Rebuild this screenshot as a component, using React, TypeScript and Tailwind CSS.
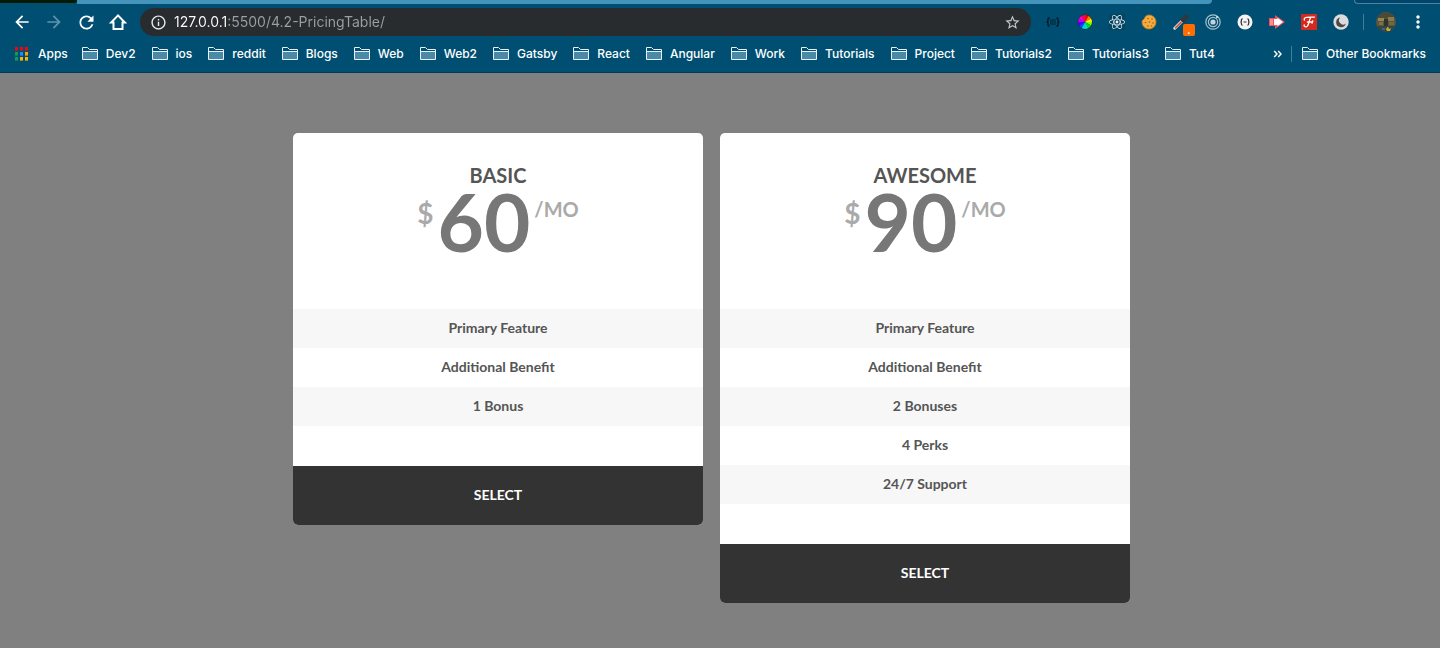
import type { ReactNode } from "react";
import { FaReact } from "react-icons/fa";
import {
  MdArrowBack,
  MdArrowForward,
  MdMoreVert,
  MdOutlineInfo,
  MdRefresh,
  MdStarBorder,
} from "react-icons/md";

const bookmarks = [
  "Dev2",
  "ios",
  "reddit",
  "Blogs",
  "Web",
  "Web2",
  "Gatsby",
  "React",
  "Angular",
  "Work",
  "Tutorials",
  "Project",
  "Tutorials2",
  "Tutorials3",
  "Tut4",
];

const plans = [
  {
    name: "Basic",
    price: 60,
    features: ["Primary Feature", "Additional Benefit", "1 Bonus"],
  },
  {
    name: "Awesome",
    price: 90,
    features: [
      "Primary Feature",
      "Additional Benefit",
      "2 Bonuses",
      "4 Perks",
      "24/7 Support",
    ],
  },
];

const appColors = [
  "#ff0000", "#ff0000", "#ff0000",
  "#0f9d58", "#1a8cff", "#ffa000",
  "#0f9d58", "#ffb300", "#ffb300",
];

const wheelColors = [
  "#ff0000", "#ff8000", "#ffee00", "#80ff00", "#00e020", "#00e8a0",
  "#00c8ff", "#0050ff", "#5000ff", "#b000ff", "#ff00d0", "#ff0060",
];

function HomeIcon() {
  return (
    <svg width="18" height="18" viewBox="0 0 18 18" fill="none" stroke="currentColor" strokeWidth="2">
      <path d="M9 2.4 L15.8 9.5 H13.5 V16 H4.5 V9.5 H2.2 Z" />
    </svg>
  );
}

function FolderIcon() {
  return (
    <svg width="16" height="14" viewBox="0 0 16 14" className="shrink-0">
      <path d="M1 5 H15 V13 H1 Z" fill="#4a8aa6" />
      <path
        d="M0.5 12.5 V0.5 H5.5 L7.5 2.5 H15.5 V12.5 Z M0.5 4.5 H15.5"
        fill="none"
        stroke="#e8f1f5"
      />
    </svg>
  );
}

function AppsIcon() {
  return (
    <svg width="14" height="14" viewBox="0 0 14 14" className="shrink-0">
      {appColors.map((color, i) => (
        <rect key={i} x={(i % 3) * 5} y={Math.floor(i / 3) * 5} width="3" height="3.6" fill={color} />
      ))}
    </svg>
  );
}

function JsonIcon() {
  return (
    <svg width="14" height="12" viewBox="0 0 14 12" fill="none" stroke="#04141d" strokeWidth="1.3">
      <path d="M3.6 1.8 Q2 1.8 2 3 V4.8 Q2 6 0.6 6 Q2 6 2 7.2 V9 Q2 10.2 3.6 10.2" />
      <path d="M10.4 1.8 Q12 1.8 12 3 V4.8 Q12 6 13.4 6 Q12 6 12 7.2 V9 Q12 10.2 10.4 10.2" />
      <path d="M4.2 4 H9.8 M4.2 6 H9.8 M4.2 8 H9.8" strokeWidth="1" strokeDasharray="1.5 0.5" />
    </svg>
  );
}

function ColorWheelIcon() {
  const point = (i: number) => {
    const a = ((i * 30 - 90) * Math.PI) / 180;
    return `${8 + 7 * Math.cos(a)} ${8 + 7 * Math.sin(a)}`;
  };
  return (
    <svg width="16" height="16" viewBox="0 0 16 16">
      <circle cx="8" cy="8" r="7.5" fill="#222222" />
      {wheelColors.map((color, i) => (
        <path key={color} d={`M8 8 L${point(i)} A7 7 0 0 1 ${point(i + 1)} Z`} fill={color} />
      ))}
    </svg>
  );
}

function CookieIcon() {
  return (
    <svg width="16" height="16" viewBox="0 0 16 16">
      <path
        d="M8 1 A7 7 0 1 1 1 8 Q1 6 2.6 5.4 Q3.6 4.8 3.8 3.4 Q5.5 1 8 1 Z"
        fill="#f2ab3c"
        stroke="#cf7d1c"
        strokeWidth="0.8"
      />
      <g fill="#a3601c">
        <circle cx="7" cy="4.5" r="0.8" />
        <circle cx="11" cy="5" r="0.8" />
        <circle cx="8.5" cy="8" r="0.8" />
        <circle cx="4.5" cy="8.5" r="0.8" />
        <circle cx="12" cy="9" r="0.8" />
        <circle cx="7" cy="12" r="0.8" />
        <circle cx="10.5" cy="12" r="0.7" />
      </g>
    </svg>
  );
}

function EyedropperIcon() {
  return (
    <svg width="16" height="16" viewBox="0 0 16 16" strokeLinecap="round">
      <path d="M1.8 14.2 L9 7" stroke="#dfe6ea" strokeWidth="3" />
      <path d="M2.5 13.8 L8 8.2" stroke="#d9482b" strokeWidth="1.6" />
      <path d="M7.5 4.5 L11.5 8.5" stroke="#33373a" strokeWidth="2" />
      <path d="M10 6 L13.5 2.5" stroke="#33373a" strokeWidth="4" />
    </svg>
  );
}

function TargetIcon() {
  return (
    <svg width="16" height="16" viewBox="0 0 16 16" fill="none" stroke="#a9c0cb">
      <circle cx="8" cy="8" r="7.2" strokeWidth="1.2" />
      <circle cx="8" cy="8" r="4.6" strokeWidth="1.2" />
      <circle cx="8" cy="8" r="2.6" fill="#c4d2d9" stroke="none" />
      <circle cx="12" cy="3" r="1.1" fill="#dbe5ea" stroke="none" />
    </svg>
  );
}

function BracesIcon() {
  return (
    <svg width="16" height="16" viewBox="0 0 16 16">
      <circle cx="8" cy="8" r="7.5" fill="#f4f4f4" />
      <path
        d="M5.6 4.8 Q4.4 4.8 4.4 6 V7 Q4.4 8 3.4 8 Q4.4 8 4.4 9 V10 Q4.4 11.2 5.6 11.2 M10.4 4.8 Q11.6 4.8 11.6 6 V7 Q11.6 8 12.6 8 Q11.6 8 11.6 9 V10 Q11.6 11.2 10.4 11.2 M6.5 8 H9.5"
        fill="none"
        stroke="#333333"
        strokeWidth="1.2"
      />
    </svg>
  );
}

function ArrowBlockIcon() {
  return (
    <svg width="16" height="14" viewBox="0 0 16 14">
      <path d="M0 3 H6 V0 L16 7 L6 14 V11 H0 Z" fill="#f0525a" />
      <path d="M5 4 H8.5 V2.8 L14 7 L8.5 11.2 V10 H5 Z" fill="#ffffff" />
      <path d="M1 4 H4 V10 H1 Z" fill="#f98c92" />
    </svg>
  );
}

function ScriptFIcon() {
  return (
    <svg width="16" height="16" viewBox="0 0 16 16">
      <rect width="16" height="16" fill="#d42a1e" />
      <path
        d="M3.4 6.2 Q2.6 3.8 5.4 3.4 Q8 3 13.4 3.2 M9.6 3.4 Q8.2 6.6 7.6 9.6 Q6.8 12.8 4.4 12.8 Q2.8 12.6 3.2 11 M6.4 8 H11.2 M11.8 6.8 L11 9.2"
        fill="none"
        stroke="#ffffff"
        strokeWidth="1.3"
        strokeLinecap="round"
      />
    </svg>
  );
}

function MoonIcon() {
  return (
    <svg width="16" height="16" viewBox="0 0 16 16">
      <circle cx="8" cy="8" r="7.7" fill="#dcdcdc" />
      <path d="M7.4 3.4 A4.9 4.9 0 1 0 12.8 9.4 A4 4 0 0 1 7.4 3.4 Z" fill="#4a4a4a" />
    </svg>
  );
}

function Avatar() {
  return (
    <svg width="20" height="20" viewBox="0 0 20 20">
      <clipPath id="avatar">
        <circle cx="10" cy="10" r="10" />
      </clipPath>
      <g clipPath="url(#avatar)">
        <rect width="20" height="20" fill="#5b5640" />
        <rect width="20" height="6" fill="#4a4a38" />
        <rect x="2" y="6" width="6" height="3" fill="#96854f" />
        <rect x="12" y="5" width="6" height="4" fill="#8a7a4a" />
        <rect x="8" y="7" width="4" height="8" fill="#2e332c" />
        <rect x="3" y="10" width="4" height="3" fill="#7d7145" />
        <rect x="13" y="10" width="5" height="3" fill="#6e6a44" />
        <rect y="14" width="20" height="6" fill="#39453f" />
        <rect x="6" y="16" width="3" height="2" fill="#3c5fa0" />
        <path d="M10 17 L12 14.5 L13 17 L15 16 L14 19 H11 Z" fill="#c9b02c" />
      </g>
    </svg>
  );
}

const extensions: { label: string; icon: ReactNode; badge?: string }[] = [
  { label: "JSON viewer", icon: <JsonIcon /> },
  { label: "Color wheel", icon: <ColorWheelIcon /> },
  {
    label: "React DevTools",
    icon: <FaReact size={16} className="bg-[#08435f] text-[#e6f3f8]" />,
  },
  { label: "Cookies", icon: <CookieIcon /> },
  { label: "Color picker", icon: <EyedropperIcon />, badge: "." },
  { label: "Target", icon: <TargetIcon /> },
  { label: "Braces", icon: <BracesIcon /> },
  { label: "Forward", icon: <ArrowBlockIcon /> },
  { label: "Font finder", icon: <ScriptFIcon /> },
  { label: "Dark mode", icon: <MoonIcon /> },
];

interface ToolButtonProps {
  label: string;
  children: ReactNode;
  badge?: string;
}

function ToolButton({ label, children, badge }: ToolButtonProps) {
  return (
    <button
      type="button"
      aria-label={label}
      className="relative flex h-7 w-8 shrink-0 items-center justify-center"
    >
      {children}
      {badge && (
        <span className="absolute right-0.5 bottom-0 flex h-3 w-3 items-center justify-center rounded-xs bg-[#ff6d00] text-[10px] leading-none font-bold text-white">
          {badge}
        </span>
      )}
    </button>
  );
}

function BrowserChrome() {
  return (
    <header className="border-b border-[#003a55] bg-[#004f73] font-['Inter',sans-serif] text-white">
      {/* Bottom edge of the tab strip */}
      <div className="flex h-1 justify-between">
        <div className="h-[3px] w-[77px] rounded-br-sm bg-[#041a04]" />
        <div className="h-1 flex-1 rounded-br-md bg-[#4493ba]" />
        <div className="ml-[142px] h-1 w-[86px] rounded-bl-md border-b border-l border-[#4586a6] bg-[#04456b]" />
      </div>

      {/* Toolbar */}
      <div className="flex h-9 items-center px-1.5">
        <ToolButton label="Back">
          <MdArrowBack size={20} />
        </ToolButton>
        <ToolButton label="Forward">
          <MdArrowForward size={20} className="text-[#5f93ab]" />
        </ToolButton>
        <ToolButton label="Reload">
          <MdRefresh size={21} />
        </ToolButton>
        <ToolButton label="Home">
          <HomeIcon />
        </ToolButton>
        <div className="mx-1.5 flex h-7 min-w-0 flex-1 items-center rounded-full bg-[#282c2f] px-2.5">
          <MdOutlineInfo size={17} className="shrink-0 text-[#e8eaed]" />
          <input
            type="text"
            aria-label="Address"
            defaultValue="127.0.0.1:5500/4.2-PricingTable/"
            className="ml-[7px] min-w-0 flex-1 bg-[linear-gradient(90deg,#ffffff_54px,#9aa0a6_54px)] bg-clip-text font-['Inter',sans-serif] text-sm text-transparent caret-white outline-none"
          />
          <button type="button" aria-label="Bookmark this page">
            <MdStarBorder size={17} className="text-[#c4c7ca]" />
          </button>
        </div>
        {extensions.map((ext) => (
          <ToolButton key={ext.label} label={ext.label} badge={ext.badge}>
            {ext.icon}
          </ToolButton>
        ))}
        <div className="mx-1.5 h-4 w-px bg-[#40809c]" />
        <ToolButton label="Profile">
          <Avatar />
        </ToolButton>
        <ToolButton label="Menu">
          <MdMoreVert size={20} />
        </ToolButton>
      </div>

      {/* Bookmarks bar */}
      <nav className="flex h-8 items-center pr-3.5 pb-1 pl-[15px] text-xs font-medium">
        <a href="#" className="mr-3.5 flex items-center gap-[9px]">
          <AppsIcon />
          Apps
        </a>
        <div className="flex min-w-0 flex-1 gap-4 overflow-hidden">
          {bookmarks.map((name) => (
            <a key={name} href="#" className="flex shrink-0 items-center gap-2">
              <FolderIcon />
              {name}
            </a>
          ))}
        </div>
        <button type="button" aria-label="More bookmarks" className="px-2">
          <svg width="10" height="8" viewBox="0 0 10 8" fill="none" stroke="currentColor" strokeWidth="1.4">
            <path d="M1.2 1 L4 4 L1.2 7 M5.2 1 L8 4 L5.2 7" />
          </svg>
        </button>
        <div className="mr-2.5 h-4 w-px bg-[#40809c]" />
        <a href="#" className="flex items-center gap-2">
          <FolderIcon />
          Other Bookmarks
        </a>
      </nav>
    </header>
  );
}

interface PlanCardProps {
  name: string;
  price: number;
  features: string[];
}

function PlanCard({ name, price, features }: PlanCardProps) {
  return (
    <section className="mr-[17px] min-w-0 flex-1 overflow-hidden rounded-[5px] bg-white text-center">
      <div className="h-44 pt-7">
        <h2 className="text-xl leading-7 font-bold text-[#555555] uppercase">{name}</h2>
        <p className="flex items-start justify-center gap-1 font-bold text-[#aaaaaa]">
          <span className="pt-2.5 text-[28px] leading-7">$</span>
          <span className="text-[80px] leading-16 text-[#777777]">{price}</span>
          <span className="pt-1.5 text-xl leading-7 uppercase">/mo</span>
        </p>
      </div>
      <ul className="pb-10 text-sm font-bold text-[#555555]">
        {features.map((feature) => (
          <li key={feature} className="h-[39px] leading-[37px] odd:bg-[#f7f7f7]">
            {feature}
          </li>
        ))}
      </ul>
      <button
        type="button"
        className="h-[59px] w-full bg-[#333333] pb-0.5 text-sm font-bold text-white uppercase"
      >
        Select
      </button>
    </section>
  );
}

export default function App() {
  return (
    <div className="min-h-screen bg-[#808080]">
      <BrowserChrome />
      <main className="mx-auto flex max-w-[854px] items-start pt-15 pb-11 font-['Lato',sans-serif]">
        {plans.map((plan) => (
          <PlanCard key={plan.name} {...plan} />
        ))}
      </main>
    </div>
  );
}
